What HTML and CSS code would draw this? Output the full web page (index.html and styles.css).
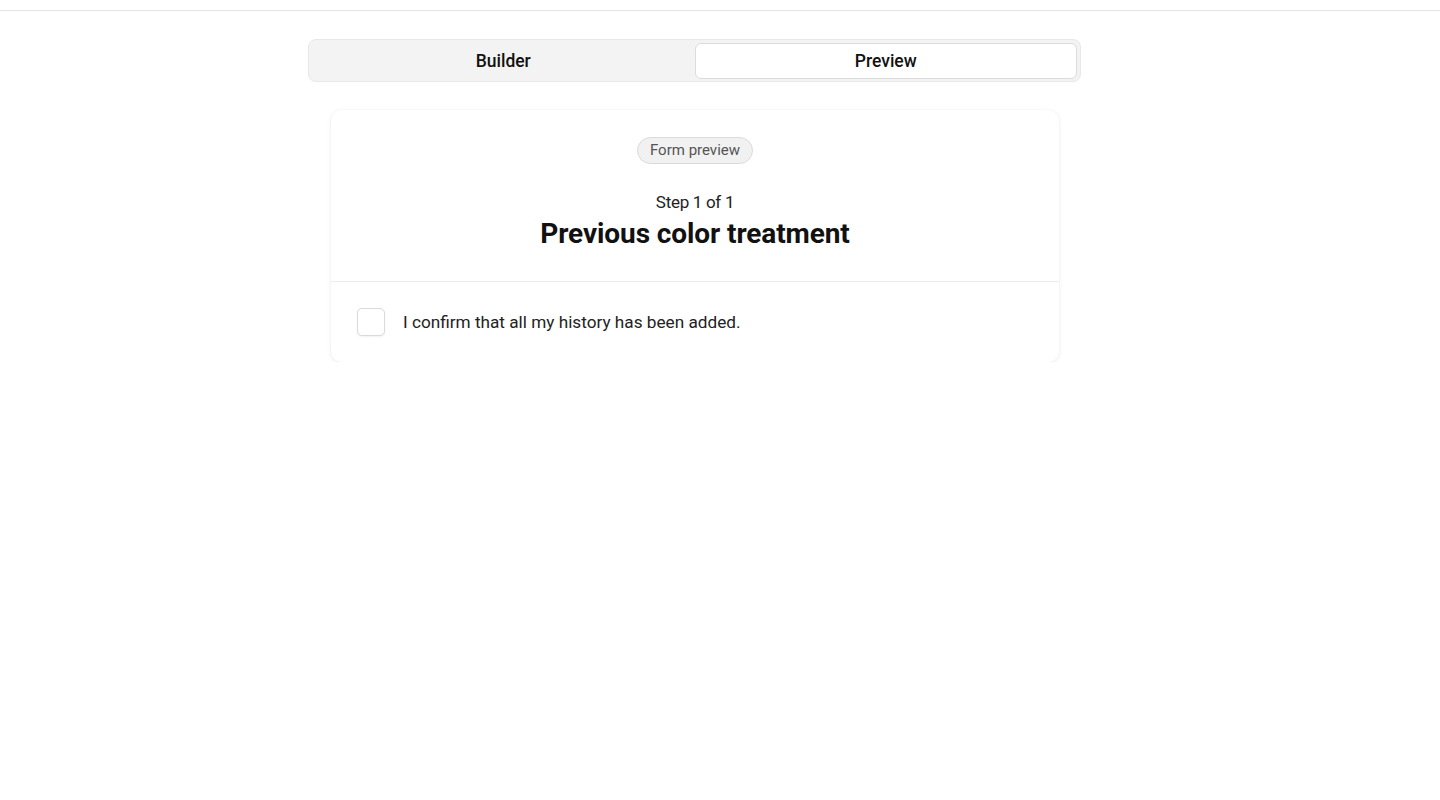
FILE: index.html
```html
<!DOCTYPE html>
<html lang="en">
<head>
<meta charset="utf-8">
<title>Form preview</title>
<link rel="stylesheet" href="styles.css">
</head>
<body>
<div class="topbar"></div>
<main class="main">
  <div class="wrap">
    <div class="tabs">
      <button class="tab">Builder</button>
      <button class="tab active">Preview</button>
    </div>
    <section class="card">
      <header class="card-head">
        <span class="pill">Form preview</span>
        <div class="step">Step 1 of 1</div>
        <h1 class="title">Previous color treatment</h1>
      </header>
      <div class="card-body">
        <label class="check-row">
          <span class="checkbox"></span>
          <span class="check-label">I confirm that all my history has been added.</span>
        </label>
      </div>
    </section>
  </div>
</main>
</body>
</html>
```

FILE: styles.css
```css
* { box-sizing: border-box; }
html, body { margin: 0; padding: 0; background: #fff; }
body { font-family: Roboto, "Liberation Sans", sans-serif; color: #1a1a1a; }
.topbar { height: 11px; border-bottom: 1px solid #e3e3e3; }
.main { padding-top: 28px; padding-left: 308px; }
.wrap { width: 773px; }
.tabs {
  display: grid; grid-template-columns: 1fr 1fr;
  height: 43px; padding: 3px 3px 2px 3px;
  background: #f3f3f3; border: 1px solid #e8e8e8; border-radius: 8px;
}
.tab {
  font-family: Roboto, "Liberation Sans", sans-serif;
  font-size: 17.5px; font-weight: 500; color: #111;
  background: transparent; border: 1px solid transparent; border-radius: 6px;
  padding: 0; cursor: pointer;
}
.tab.active { background: #fff; border-color: #dcdcdc; }
.card {
  margin: 28px 22px 0 23px;
  background: #fff; border-radius: 10px;
  box-shadow: 0 1px 4px rgba(0,0,0,0.08), 0 0 1px rgba(0,0,0,0.06);
}
.card-head {
  display: flex; flex-direction: column; align-items: center;
  padding: 27px 20px 30px;
  border-bottom: 1px solid #ececec;
}
.pill {
  display: inline-block; height: 27px; line-height: 25px;
  padding: 0 12px; font-size: 15px; color: #555;
  background: #f1f1f1; border: 1px solid #dadada; border-radius: 14px;
}
.step { margin-top: 26px; font-size: 17px; color: #222; line-height: 24px; letter-spacing: -0.3px; }
.title { margin: 3px 0 0; font-size: 28px; font-weight: 700; line-height: 34px; color: #111; letter-spacing: -0.1px; }
.card-body { padding: 26px 26px 26px; }
.check-row { display: flex; align-items: center; gap: 18px; }
.checkbox {
  width: 28px; height: 28px; border: 1px solid #dadada; border-radius: 5px;
  background: #fff; box-shadow: 0 1px 2px rgba(0,0,0,0.06); flex: none;
}
.check-label { font-size: 17.2px; color: #222; line-height: 24px; margin-top: -1px; }
```
